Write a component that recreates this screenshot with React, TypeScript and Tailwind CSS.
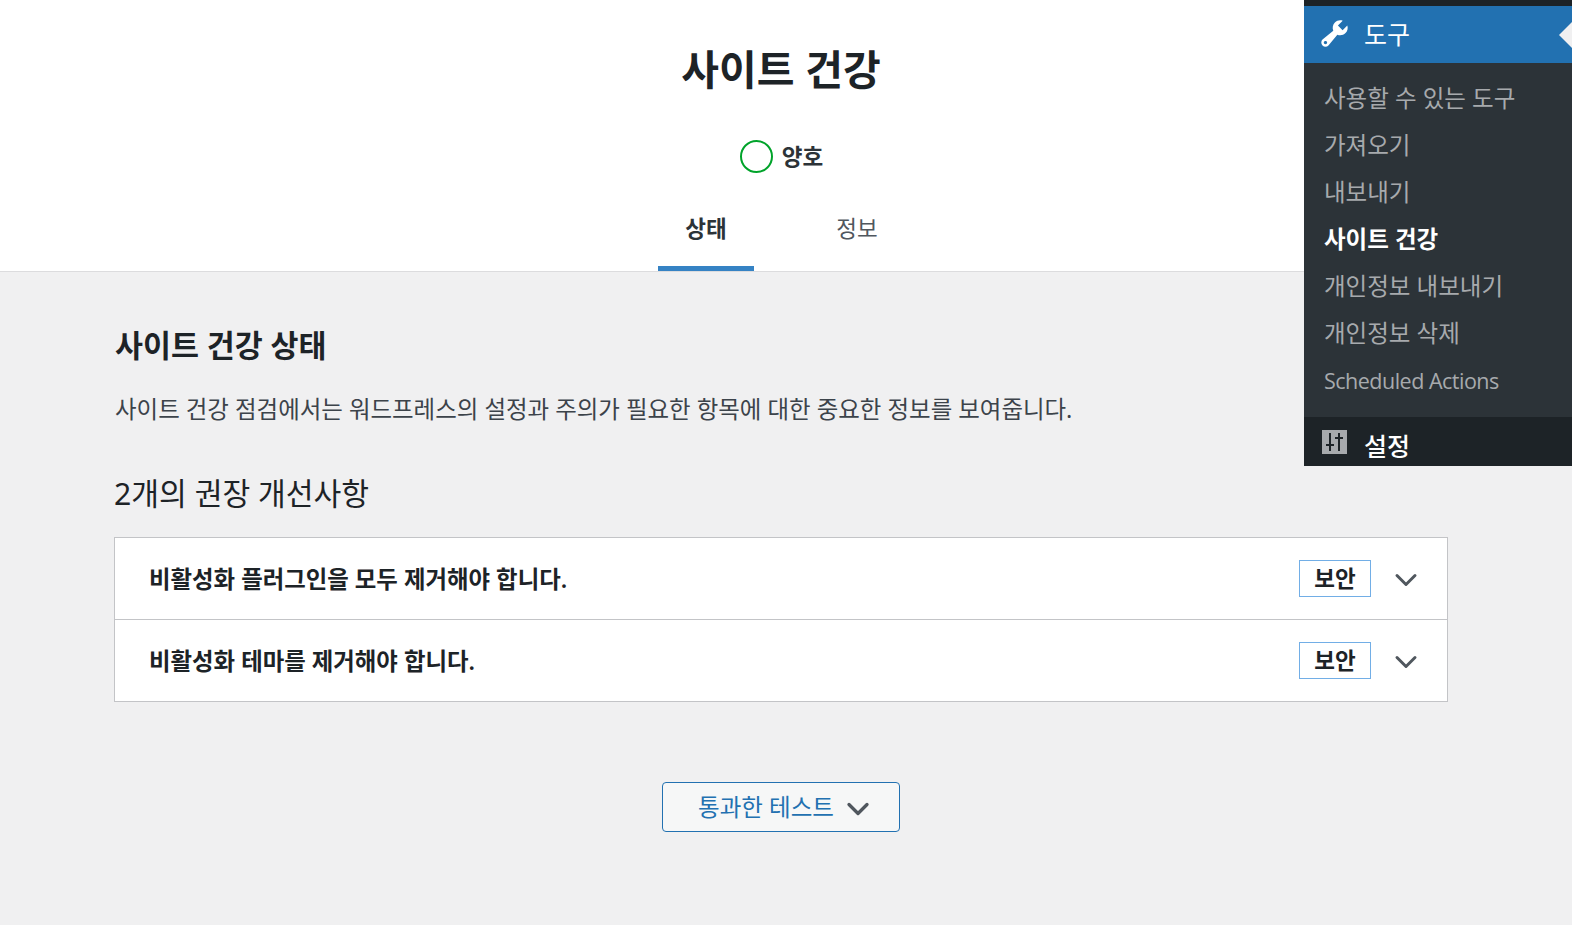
import { ChevronDown } from 'lucide-react';

const menuItems = [
  { label: '사용할 수 있는 도구' },
  { label: '가져오기' },
  { label: '내보내기' },
  { label: '사이트 건강', current: true },
  { label: '개인정보 내보내기' },
  { label: '개인정보 삭제' },
];

const issues = ['비활성화 플러그인을 모두 제거해야 합니다.', '비활성화 테마를 제거해야 합니다.'];

const IssueRow = ({ title }: { title: string }) => (
  <div className="flex h-[82px] items-center border-b border-[#c3c4c7] bg-white pl-[34px] pr-[23px] last:h-[81px] last:border-b-0">
    <h4 className="flex-1 pt-[2px] text-[23.4px] font-semibold leading-none text-[#1d2327]">{title}</h4>
    <span className="flex h-[37px] w-[72px] items-center justify-center border border-[#72aee6] pt-[1px] text-[22.5px] font-semibold leading-none text-[#1d2327]">
      보안
    </span>
    <ChevronDown className="ml-[17px] mt-[2px] h-9 w-9 text-[#50575e]" strokeWidth={2} />
  </div>
);

const App = () => {
  return (
    <div
      className="relative h-[925px] w-[1572px] overflow-hidden bg-[#f0f0f1] pr-[10px] text-[#1d2327]"
      style={{ fontFamily: '"Noto Sans", "Noto Sans CJK KR", sans-serif' }}
    >
      <header className="-mr-[10px] flex h-[272px] flex-col border-b border-[#dcdcde] bg-white pr-[10px] text-center">
        <h1 className="pt-[45px] text-[41px] font-semibold leading-[48px] text-[#1d2327]">사이트 건강</h1>
        <div className="mt-[47px] flex h-[32px] items-center justify-center gap-[9px]">
          <span className="ml-[1px] h-[33px] w-[33px] rounded-full border-[2.5px] border-[#00a32a]" />
          <span className="pt-[2px] text-[22.5px] font-semibold leading-none text-[#2c3338]">양호</span>
        </div>
        <nav className="mt-auto flex justify-center gap-[56px]">
          <a className="flex h-[61px] w-[96px] items-center justify-center border-b-[5px] border-[#3582c4] pb-[18px] text-[22.5px] font-semibold leading-none text-[#2c3338]">
            상태
          </a>
          <a className="flex h-[61px] w-[94px] items-center justify-center pb-[23px] text-[22.5px] leading-none text-[#50575e]">
            정보
          </a>
        </nav>
      </header>

      <main className="pl-[114px] pr-[114px]">
        <h2 className="ml-[1px] pt-[52px] text-[30.4px] font-semibold leading-[44px] text-[#1d2327]">사이트 건강 상태</h2>
        <p className="ml-[1px] mt-[25px] text-[23.45px] leading-[32px] text-[#3c434a]">
          사이트 건강 점검에서는 워드프레스의 설정과 주의가 필요한 항목에 대한 중요한 정보를 보여줍니다.
        </p>
        <h3 className="mt-[49px] text-[30.2px] leading-[40px] text-[#1d2327]">2개의 권장 개선사항</h3>
        <div className="mt-[23px] border border-[#c3c4c7]">
          {issues.map((issue) => (
            <IssueRow key={issue} title={issue} />
          ))}
        </div>
        <div className="mt-[80px] flex justify-center">
          <button className="flex h-[50px] w-[238px] items-center justify-center gap-[6px] rounded-[4px] border border-[#2271b1] bg-[#f6f7f7] pl-[5px] text-[23.5px] leading-none text-[#2271b1]">
            <span className="pt-[2px]">통과한 테스트</span>
            <ChevronDown className="-mr-[7px] mt-[3px] h-9 w-9 text-[#50575e]" strokeWidth={2.2} />
          </button>
        </div>
      </main>

      {/* 도구 flyout */}
      <aside className="absolute right-0 top-0 w-[268px] bg-[#1d2327]">
        <div className="pt-[6px]">
          <div className="relative flex h-[57px] items-center bg-[#2271b1] pl-[14px]">
            <svg viewBox="0 0 20 20" className="-mt-[2px] h-[33px] w-[33px] fill-white">
              <path d="M16.68 9.77c-1.34 1.34-3.3 1.67-4.95.99l-5.41 6.52c-.99.99-2.59.99-3.58 0s-.99-2.59 0-3.57l6.52-5.42c-.68-1.65-.35-3.61.99-4.95 1.28-1.28 3.12-1.62 4.72-1.06l-2.89 2.89 2.82 2.82 2.86-2.87c.53 1.58.18 3.39-1.08 4.65zM3.81 16.21c.4.39 1.04.39 1.43 0 .4-.4.4-1.04 0-1.43-.39-.4-1.03-.4-1.43 0-.39.39-.39 1.03 0 1.43z" />
            </svg>
            <span className="ml-[13px] text-[25px] leading-none text-white">도구</span>
            <span className="absolute right-0 top-1/2 h-0 w-0 -translate-y-1/2 border-y-[13px] border-r-[13px] border-y-transparent border-r-[#f0f0f1]" />
          </div>
          <ul className="bg-[#2c3338] pb-[12px] pt-[11px]">
            {menuItems.map((item) => (
              <li
                key={item.label}
                className={`flex h-[47px] items-center pl-[20px] pt-[2px] text-[23.5px] leading-none ${
                  item.current ? 'font-semibold text-white' : 'text-[#a7aaad]'
                }`}
              >
                {item.label}
              </li>
            ))}
            <li
              className="flex h-[49px] items-center pl-[20px] text-[21.5px] leading-none tracking-[-0.5px] text-[#a7aaad]"
              style={{ fontFamily: '"Open Sans", sans-serif' }}
            >
              Scheduled Actions
            </li>
          </ul>
          <div className="flex h-[49px] items-center pl-[18px]">
            <span className="flex h-[24px] w-[25px] items-center justify-center bg-[#a7aaad]">
              <svg viewBox="0 0 25 24" className="h-[24px] w-[25px] fill-[#1d2327]">
                <path d="M7 3h2v11H7zM4 14h8v2H4zM7 16h2v5H7zM16 3h2v4h-2zM13 7h8v2h-8zM16 9h2v12h-2z" />
              </svg>
            </span>
            <span className="ml-[17px] pt-[9px] text-[25px] font-medium leading-none text-white">설정</span>
          </div>
        </div>
      </aside>
    </div>
  );
};

export default App;
